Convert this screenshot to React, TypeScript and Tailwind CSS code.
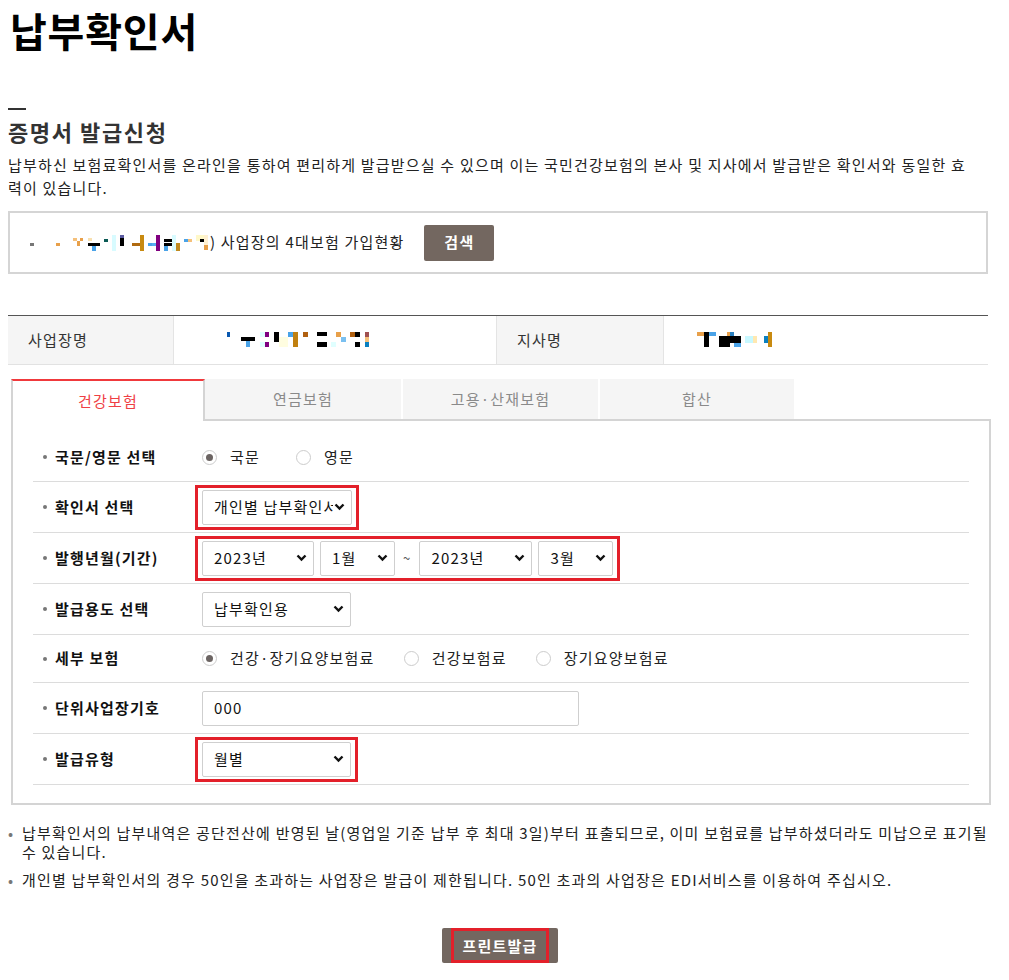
import React from 'react';

type Px = [number, number, number, number, string];

// redacted name blocks (mosaic), coordinates relative to the art box
const searchArt: Px[] = [
    [0, 8, 4, 3, '#777777'],
    [26, 8, 4, 3, '#e8a04a'],
    [43, 3, 4, 3, '#f5c07a'],
    [47, 6, 3, 5, '#e8a04a'],
    [50, 3, 3, 3, '#e8a04a'],
    [58, 3, 4, 3, '#f8e0b0'],
    [58, 8, 12, 3, '#000000'],
    [62, 11, 4, 5, '#4aa3e8'],
    [74, 4, 4, 3, '#0b5a55'],
    [82, 0, 4, 16, '#d8fbff'],
    [90, 0, 4, 3, '#5a5aa0'],
    [90, 3, 4, 8, '#000000'],
    [102, 8, 8, 3, '#b06a10'],
    [110, 0, 4, 16, '#c88a10'],
    [118, 8, 4, 3, '#4aa3e8'],
    [122, 8, 4, 3, '#58b0f0'],
    [126, 0, 4, 16, '#800080'],
    [134, 4, 8, 3, '#000000'],
    [134, 8, 8, 3, '#000000'],
    [134, 11, 4, 5, '#4aa3e8'],
    [142, 0, 4, 16, '#d8fbff'],
    [146, 8, 4, 8, '#c08a20'],
    [154, 4, 4, 3, '#4aa3e8'],
    [158, 4, 4, 3, '#f5c07a'],
    [166, 0, 8, 6, '#fff8c8'],
    [170, 4, 4, 3, '#000000'],
    [174, 0, 4, 10, '#fff0d0'],
    [174, 10, 4, 5, '#e8a04a'],
];

const companyArt: Px[] = [
    [0, 0, 3, 5, '#0a58b0'],
    [14, 5, 14, 4, '#000000'],
    [19, 9, 4, 6, '#4aa3e8'],
    [33, 0, 5, 5, '#e0ffff'],
    [33, 10, 5, 5, '#e0ffff'],
    [38, 0, 4, 5, '#800080'],
    [38, 10, 4, 5, '#800080'],
    [47, 0, 5, 10, '#000000'],
    [52, 5, 9, 10, '#fffde0'],
    [61, 0, 5, 5, '#4aa3e8'],
    [66, 0, 5, 15, '#c08010'],
    [76, 0, 5, 5, '#b06010'],
    [90, 0, 10, 4, '#000000'],
    [90, 10, 10, 5, '#000000'],
    [104, 10, 5, 5, '#e0ffff'],
    [109, 0, 5, 5, '#e8a04a'],
    [114, 5, 5, 5, '#7ac0f0'],
    [123, 0, 5, 5, '#b06010'],
    [128, 0, 5, 5, '#000000'],
    [128, 10, 5, 5, '#000000'],
    [138, 0, 4, 5, '#a05050'],
    [138, 5, 4, 5, '#f5c07a'],
    [138, 10, 4, 5, '#0a80c0'],
];

const branchArt: Px[] = [
    [0, 0, 7, 4, '#e8a04a'],
    [7, 0, 5, 15, '#000000'],
    [12, 0, 7, 4, '#4aa3e8'],
    [22, 4, 11, 11, '#000000'],
    [30, 0, 3, 4, '#e8a04a'],
    [33, 0, 4, 4, '#2a80c0'],
    [33, 4, 11, 7, '#000000'],
    [37, 11, 7, 4, '#4aa3e8'],
    [48, 4, 8, 7, '#c8f8ff'],
    [56, 4, 4, 7, '#ffe8b0'],
    [67, 4, 4, 7, '#0a80c0'],
    [71, 0, 4, 15, '#c88a10'],
];

const Mosaic: React.FC<{ data: Px[]; w: number }> = ({ data, w }) => (
    <svg width={w} height={16} viewBox={`0 0 ${w} 16`} className="block shrink-0" shapeRendering="crispEdges">
        {data.map(([x, y, rw, rh, c], i) => (
            <rect key={i} x={x} y={y} width={rw} height={rh} fill={c} />
        ))}
    </svg>
);

const Chevron = () => (
    <svg width="11" height="8" viewBox="0 0 11 8" className="shrink-0">
        <path d="M1.5 1.5l4 4 4-4" fill="none" stroke="#111" strokeWidth="2.4" />
    </svg>
);

const Select: React.FC<{ value: string; w: string }> = ({ value, w }) => (
    <div className={`${w} h-[35px] border border-[#cfcfcf] rounded-[2px] bg-white flex items-center pl-[11px] pr-[6px] gap-[1px]`}>
        <span className="flex-1 overflow-hidden whitespace-nowrap text-[15px] text-[#111]">{value}</span>
        <Chevron />
    </div>
);

const Radio: React.FC<{ checked?: boolean; label: string }> = ({ checked, label }) => (
    <label className="flex items-center gap-[13px]">
        <span className="w-[15px] h-[15px] rounded-full border border-[#cccccc] bg-white flex items-center justify-center">
            {checked && <span className="w-[7px] h-[7px] rounded-full bg-[#6b6462]" />}
        </span>
        <span className="text-[15px] text-[#222]">{label}</span>
    </label>
);

const Row: React.FC<{ label: string; h: string; children: React.ReactNode }> = ({ label, h, children }) => (
    <div className={`${h} flex items-center border-b border-[#dcdcdc]`}>
        <div className="w-[169px] flex items-center pl-[10px]">
            <span className="w-[4px] h-[4px] rounded-full bg-[#777] mr-[8px]" />
            <span className="text-[15px] font-bold text-[#111]">{label}</span>
        </div>
        <div className="flex-1 flex items-center">{children}</div>
    </div>
);

const RedBox: React.FC<{ children: React.ReactNode }> = ({ children }) => (
    <div className="-ml-[7px] border-[3px] border-[#e3202a] px-[4px] py-[2px] flex items-center gap-[6px]">{children}</div>
);

const App: React.FC = () => {
    return (
        <div className="w-[1009px] min-h-[980px] bg-white text-[#333] tracking-[1.2px] font-['Noto_Sans_CJK_KR','Noto_Sans',sans-serif]">
            <div className="px-[8px]">
                <h1 className="pt-[6px] pl-[2px] text-[40px] leading-[48px] font-bold text-black tracking-[0.8px]">납부확인서</h1>

                <div className="mt-[54px] w-[18px] h-[2px] bg-[#333]" />
                <h2 className="mt-[7px] text-[22px] leading-[28px] font-bold text-[#333] tracking-[1.6px]">증명서 발급신청</h2>
                <p className="mt-[8px] w-[970px] text-[15px] leading-[23px] text-[#222]">
                    납부하신 보험료확인서를 온라인을 통하여 편리하게 발급받으실 수 있으며 이는 국민건강보험의 본사 및 지사에서 발급받은 확인서와 동일한 효력이 있습니다.
                </p>

                {/* search */}
                <div className="mt-[12px] w-[980px] h-[63px] border-2 border-[#d5d5d5] flex items-center pl-[20px]">
                    <Mosaic data={searchArt} w={180} />
                    <span className="text-[15px] text-[#222]">) 사업장의 4대보험 가입현황</span>
                    <button className="ml-[20px] w-[70px] h-[36px] rounded-[2px] bg-[#736760] text-white text-[15px] font-bold tracking-[1.5px]">검색</button>
                </div>

                {/* company info */}
                <div className="mt-[41px] w-[980px] border-t border-[#555] border-b border-b-[#e2e2e2] flex h-[50px]">
                    <div className="w-[166px] bg-[#f5f5f5] flex items-center pl-[20px] text-[15px] text-[#333] border-r border-[#e4e4e4]">사업장명</div>
                    <div className="w-[323px] flex items-center pl-[53px] border-r border-[#e4e4e4]">
                        <Mosaic data={companyArt} w={144} />
                    </div>
                    <div className="w-[167px] bg-[#f5f5f5] flex items-center pl-[20px] text-[15px] text-[#333] border-r border-[#e4e4e4]">지사명</div>
                    <div className="flex-1 flex items-center pl-[33px]">
                        <Mosaic data={branchArt} w={76} />
                    </div>
                </div>

                {/* tabs */}
                <div className="mt-[14px] ml-[3px] w-[980px]">
                    <div className="flex h-[42px]">
                        <div className="w-[194px] border-t-2 border-t-[#f0393c] border-x-2 border-x-[#d4d4d4] bg-white flex items-center justify-center text-[15px] text-[#ef3f45]">건강보험</div>
                        <div className="flex-1 flex gap-[2px] border-b-2 border-[#d4d4d4]">
                            <div className="w-[196px] bg-[#f5f5f5] flex items-center justify-center text-[15px] text-[#8a8a8a]">연금보험</div>
                            <div className="w-[195px] bg-[#f5f5f5] flex items-center justify-center text-[15px] text-[#8a8a8a]">고용·산재보험</div>
                            <div className="w-[194px] bg-[#f5f5f5] flex items-center justify-center text-[15px] text-[#8a8a8a]">합산</div>
                        </div>
                    </div>
                    <div className="border-x-2 border-b-2 border-[#d4d4d4] px-[20px] pt-[12px] pb-[18px]">
                        <Row label="국문/영문 선택" h="h-[49px]">
                            <div className="flex items-center gap-[36px]">
                                <Radio checked label="국문" />
                                <Radio label="영문" />
                            </div>
                        </Row>
                        <Row label="확인서 선택" h="h-[51px]">
                            <RedBox>
                                <Select value="개인별 납부확인서" w="w-[150px]" />
                            </RedBox>
                        </Row>
                        <Row label="발행년월(기간)" h="h-[51px]">
                            <RedBox>
                                <Select value="2023년" w="w-[112px]" />
                                <Select value="1월" w="w-[75px]" />
                                <span className="text-[13px] text-[#555] px-[2px]">~</span>
                                <Select value="2023년" w="w-[113px]" />
                                <Select value="3월" w="w-[75px]" />
                            </RedBox>
                        </Row>
                        <Row label="발급용도 선택" h="h-[51px]">
                            <Select value="납부확인용" w="w-[149px]" />
                        </Row>
                        <Row label="세부 보험" h="h-[48px]">
                            <div className="flex items-center gap-[29px]">
                                <Radio checked label="건강·장기요양보험료" />
                                <Radio label="건강보험료" />
                                <Radio label="장기요양보험료" />
                            </div>
                        </Row>
                        <Row label="단위사업장기호" h="h-[51px]">
                            <div className="w-[377px] h-[35px] border border-[#cfcfcf] rounded-[2px] flex items-center pl-[11px] text-[15px] text-[#111]">000</div>
                        </Row>
                        <Row label="발급유형" h="h-[51px]">
                            <RedBox>
                                <Select value="월별" w="w-[149px]" />
                            </RedBox>
                        </Row>
                    </div>
                </div>

                {/* notes */}
                <ul className="mt-[18px] text-[15px] leading-[19px] text-[#222]">
                    <li className="flex">
                        <span className="w-[14px] shrink-0 text-[#777]">•</span>
                        <span>납부확인서의 납부내역은 공단전산에 반영된 날(영업일 기준 납부 후 최대 3일)부터 표출되므로, 이미 보험료를 납부하셨더라도 미납으로 표기될 수 있습니다.</span>
                    </li>
                    <li className="flex mt-[9px]">
                        <span className="w-[14px] shrink-0 text-[#777]">•</span>
                        <span>개인별 납부확인서의 경우 50인을 초과하는 사업장은 발급이 제한됩니다. 50인 초과의 사업장은 EDI서비스를 이용하여 주십시오.</span>
                    </li>
                </ul>

                <div className="mt-[39px] flex justify-center pr-[9px]">
                    <button className="h-[35px] px-[9px] rounded-[2px] bg-[#736760]">
                        <span className="block h-full px-[8px] border-[3px] border-[#e3202a] text-white text-[15px] font-bold leading-[29px]">프린트발급</span>
                    </button>
                </div>
            </div>
        </div>
    );
};

export default App;
